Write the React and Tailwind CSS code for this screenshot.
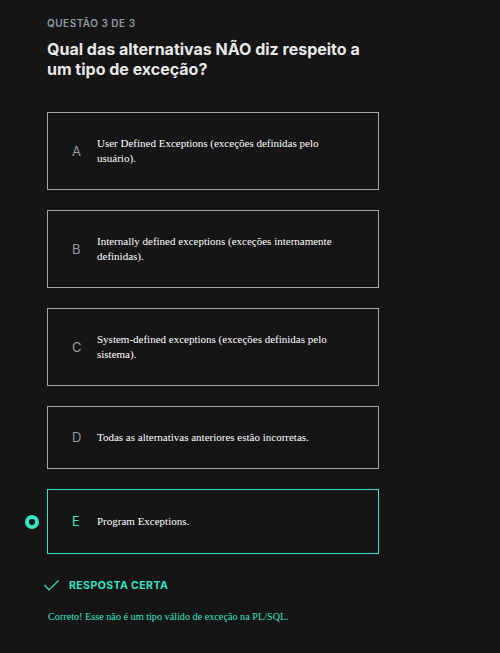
import { useState } from 'react'

const options = [
  { letter: 'A', text: 'User Defined Exceptions (exceções definidas pelo usuário).' },
  { letter: 'B', text: 'Internally defined exceptions (exceções internamente definidas).' },
  { letter: 'C', text: 'System-defined exceptions (exceções definidas pelo sistema).' },
  { letter: 'D', text: 'Todas as alternativas anteriores estão incorretas.' },
  { letter: 'E', text: 'Program Exceptions.' },
]

function Option({ option, selected }) {
  return (
    <div className="flex items-center">
      <div className="w-[47px] shrink-0 pl-[25px]">
        {selected && (
          <span className="block w-[14px] h-[14px] rounded-full border-[4px] border-[#35e3c6]" />
        )}
      </div>
      <div
        className={`w-[332px] flex items-center border pl-[24px] pr-[40px] ${
          selected ? 'border-[#35e3c6] py-[24px]' : 'border-[#9aa7ae] py-[23px]'
        }`}
      >
        <span
          className={`w-[25px] shrink-0 text-[13px] leading-[15px] ${
            selected ? 'text-[#35e3c6]' : 'text-[#8e9ba3]'
          }`}
          style={{ fontFamily: 'Inter, sans-serif' }}
        >
          {option.letter}
        </span>
        <p
          className="text-[11px] leading-[15px] text-white"
          style={{ fontFamily: '"Liberation Serif", serif' }}
        >
          {option.text}
        </p>
      </div>
    </div>
  )
}

export default function App() {
  const [answer] = useState('E')

  return (
    <div className="min-h-[653px] bg-[#151515] pt-[16px]" style={{ fontFamily: 'Inter, sans-serif' }}>
      <div className="pl-[47px]">
        <p className="text-[10px] leading-[14px] font-semibold tracking-[0.05em] text-[#8e9ba3] uppercase">
          Questão 3 de 3
        </p>
        <h1 className="mt-[9px] w-[340px] text-[16px] leading-[20px] font-bold text-[#e8e8e8]">
          Qual das alternativas NÃO diz respeito a um tipo de exceção?
        </h1>
      </div>

      <div className="mt-[33px] flex flex-col gap-[20px]">
        {options.map(o => (
          <Option key={o.letter} option={o} selected={o.letter === answer} />
        ))}
      </div>

      <div className="pl-[44px] mt-[24px] flex items-center gap-[10px]">
        <svg width="15" height="11" viewBox="0 0 15 11" fill="none">
          <path d="M0.5 5 L5 10 L14.5 0.5" stroke="#35e3c6" strokeWidth="1.2" />
        </svg>
        <span className="text-[10.5px] font-bold tracking-[0.04em] text-[#35e3c6] uppercase">
          Resposta certa
        </span>
      </div>

      <p
        className="pl-[48px] mt-[16px] text-[10.2px] leading-[14px] text-[#35e3c6]"
        style={{ fontFamily: '"Liberation Serif", serif' }}
      >
        Correto! Esse não é um tipo válido de exceção na PL/SQL.
      </p>
    </div>
  )
}
